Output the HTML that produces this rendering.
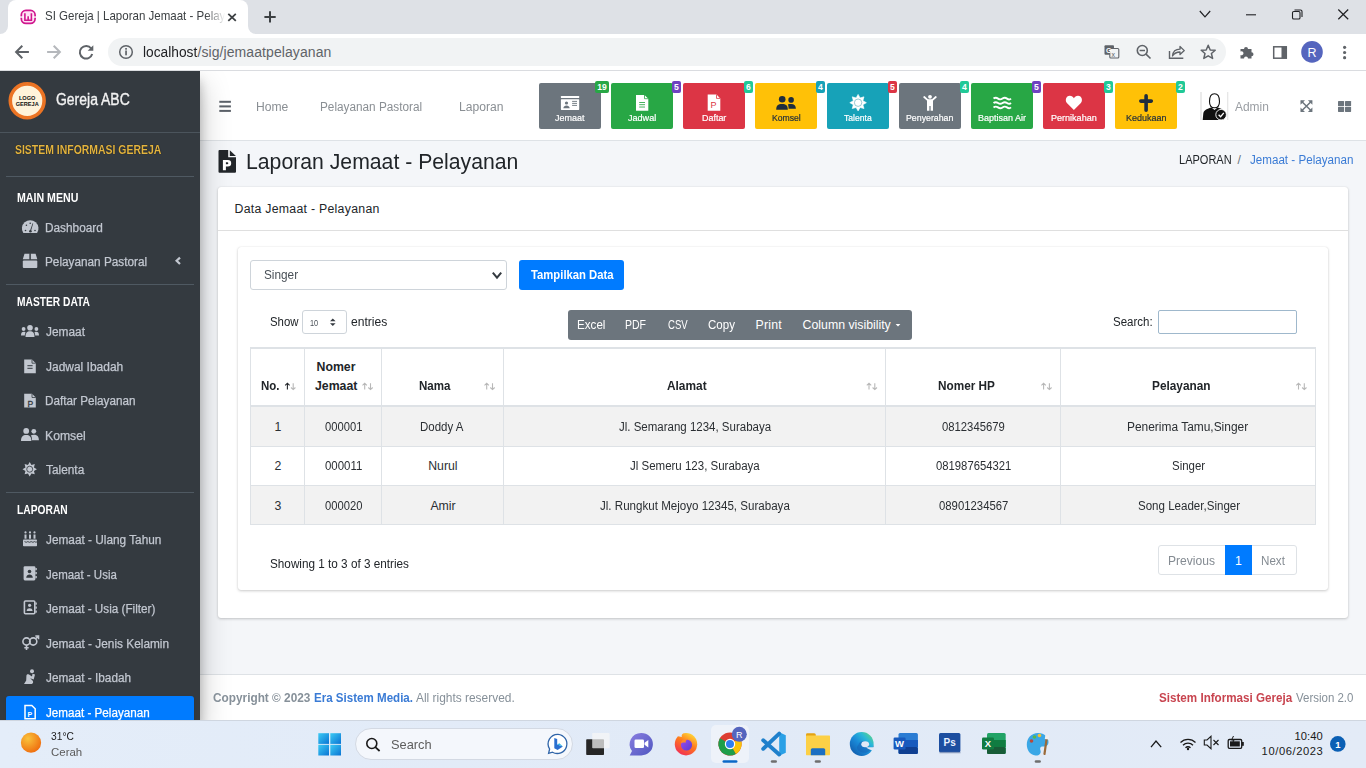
<!DOCTYPE html>
<html><head><meta charset="utf-8"><title>SI Gereja | Laporan Jemaat - Pelayanan</title>
<style>
*{box-sizing:border-box;margin:0;padding:0}
html,body{width:1366px;height:768px;overflow:hidden;background:#f4f6f9;font-family:"Liberation Sans",sans-serif}
.a{position:absolute}
.t{position:absolute;white-space:nowrap;font-family:"Liberation Sans",sans-serif}
svg{position:absolute;overflow:visible}
</style></head><body>
<!-- ===== Chrome window ===== -->
<div class="a" style="left:0;top:0;width:1366px;height:34px;background:#dee1e6"></div>
<div class="a" style="left:8px;top:0;width:240px;height:34px;background:#fff;border-radius:8px 8px 0 0"></div>
<div class="a" style="left:0;top:26px;width:8px;height:8px;background:#fff"></div>
<div class="a" style="left:0;top:26px;width:8px;height:8px;background:#dee1e6;border-bottom-right-radius:8px"></div>
<div class="a" style="left:248px;top:26px;width:8px;height:8px;background:#fff"></div>
<div class="a" style="left:248px;top:26px;width:8px;height:8px;background:#dee1e6;border-bottom-left-radius:8px"></div>
<div class="a" style="left:0;top:34px;width:1366px;height:36px;background:#fff"></div>
<div class="a" style="left:0;top:70px;width:1366px;height:1px;background:#dadce0"></div>
<div class="a" style="left:108px;top:38px;width:1118px;height:28px;background:#f1f3f4;border-radius:14px"></div>

<!-- ===== Page ===== -->
<div class="a" style="left:0;top:71px;width:1366px;height:649px;background:#f4f6f9"></div>
<!-- navbar -->
<div class="a" style="left:200px;top:71px;width:1166px;height:70px;background:#fff;border-bottom:1px solid #dee2e6"></div>
<!-- footer -->
<div class="a" style="left:200px;top:674px;width:1166px;height:46px;background:#fff;border-top:1px solid #dee2e6"></div>
<!-- sidebar -->
<div class="a" style="left:0;top:71px;width:200px;height:649px;background:#343a40;box-shadow:0 14px 28px rgba(0,0,0,.25),0 10px 10px rgba(0,0,0,.22);clip-path:inset(0 -40px 0 0)"></div>
<div class="a" style="left:0;top:132px;width:200px;height:1px;background:#4b545c"></div>
<div class="a" style="left:6px;top:176px;width:188px;height:1px;background:#4f5962"></div>
<div class="a" style="left:6px;top:284px;width:188px;height:1px;background:#4f5962"></div>
<div class="a" style="left:6px;top:492px;width:188px;height:1px;background:#4f5962"></div>
<div class="a" style="left:6px;top:696px;width:188px;height:35px;background:#007bff;border-radius:3px;box-shadow:0 1px 3px rgba(0,0,0,.12)"></div>

<!-- outer card -->
<div class="a" style="left:218px;top:187px;width:1130px;height:431px;background:#fff;border-radius:3px;box-shadow:0 0 1px rgba(0,0,0,.125),0 1px 3px rgba(0,0,0,.2)"></div>
<div class="a" style="left:218px;top:230px;width:1130px;height:1px;background:rgba(0,0,0,.125)"></div>
<!-- inner card -->
<div class="a" style="left:238px;top:247px;width:1090px;height:343px;background:#fff;border-radius:3px;box-shadow:0 0 1px rgba(0,0,0,.125),0 1px 3px rgba(0,0,0,.2)"></div>
<!-- select -->
<div class="a" style="left:250px;top:260px;width:257px;height:30px;background:#fff;border:1px solid #ced4da;border-radius:3px"></div>
<!-- tampilkan -->
<div class="a" style="left:519px;top:260px;width:105px;height:30px;background:#007bff;border-radius:3px"></div>
<!-- length select -->
<div class="a" style="left:302px;top:310px;width:45px;height:24px;background:#fff;border:1px solid #ced4da;border-radius:3px"></div>
<!-- btn group -->
<div class="a" style="left:568px;top:310px;width:344px;height:30px;background:#6c757d;border-radius:3px"></div>
<!-- search input -->
<div class="a" style="left:1158px;top:310px;width:139px;height:24px;background:#fff;border:1px solid #9fb8cc;border-radius:2px"></div>

<!-- table -->
<div class="a" style="left:250px;top:347px;width:1066px;height:178px;background:#fff;border:1px solid #dee2e6"></div>
<div class="a" style="left:251px;top:407px;width:1064px;height:39px;background:#f2f2f2"></div>
<div class="a" style="left:251px;top:485px;width:1064px;height:39px;background:#f2f2f2"></div>
<div class="a" style="left:250px;top:347px;width:1066px;height:2px;background:#dee2e6"></div>
<div class="a" style="left:250px;top:405px;width:1066px;height:2px;background:#dee2e6"></div>
<div class="a" style="left:250px;top:446px;width:1066px;height:1px;background:#dee2e6"></div>
<div class="a" style="left:250px;top:485px;width:1066px;height:1px;background:#dee2e6"></div>
<div class="a" style="left:304px;top:347px;width:1px;height:178px;background:#dee2e6"></div>
<div class="a" style="left:381px;top:347px;width:1px;height:178px;background:#dee2e6"></div>
<div class="a" style="left:503px;top:347px;width:1px;height:178px;background:#dee2e6"></div>
<div class="a" style="left:885px;top:347px;width:1px;height:178px;background:#dee2e6"></div>
<div class="a" style="left:1060px;top:347px;width:1px;height:178px;background:#dee2e6"></div>

<!-- pagination -->
<div class="a" style="left:1158px;top:545px;width:139px;height:30px;background:#fff;border:1px solid #dee2e6;border-radius:3px"></div>
<div class="a" style="left:1225px;top:545px;width:27px;height:30px;background:#007bff"></div>

<!-- navbar buttons -->
<div class="a" style="left:539px;top:83px;width:62px;height:46px;background:#6c757d;border-radius:2px"></div>
<div class="a" style="left:595px;top:81px;width:14px;height:12px;background:#28a745;border-radius:2px;color:#fff;font:700 8.6px/12px 'Liberation Sans';text-align:center">19</div>
<div class="a" style="left:611px;top:83px;width:62px;height:46px;background:#28a745;border-radius:2px"></div>
<div class="a" style="left:672px;top:81px;width:9px;height:12px;background:#6f42c1;border-radius:2px;color:#fff;font:700 8.6px/12px 'Liberation Sans';text-align:center">5</div>
<div class="a" style="left:683px;top:83px;width:62px;height:46px;background:#dc3545;border-radius:2px"></div>
<div class="a" style="left:744px;top:81px;width:9px;height:12px;background:#20c997;border-radius:2px;color:#fff;font:700 8.6px/12px 'Liberation Sans';text-align:center">6</div>
<div class="a" style="left:755px;top:83px;width:62px;height:46px;background:#ffc107;border-radius:2px"></div>
<div class="a" style="left:816px;top:81px;width:9px;height:12px;background:#17a2b8;border-radius:2px;color:#fff;font:700 8.6px/12px 'Liberation Sans';text-align:center">4</div>
<div class="a" style="left:827px;top:83px;width:62px;height:46px;background:#17a2b8;border-radius:2px"></div>
<div class="a" style="left:888px;top:81px;width:9px;height:12px;background:#dc3545;border-radius:2px;color:#fff;font:700 8.6px/12px 'Liberation Sans';text-align:center">5</div>
<div class="a" style="left:899px;top:83px;width:62px;height:46px;background:#6c757d;border-radius:2px"></div>
<div class="a" style="left:960px;top:81px;width:9px;height:12px;background:#20c997;border-radius:2px;color:#fff;font:700 8.6px/12px 'Liberation Sans';text-align:center">4</div>
<div class="a" style="left:971px;top:83px;width:62px;height:46px;background:#28a745;border-radius:2px"></div>
<div class="a" style="left:1032px;top:81px;width:9px;height:12px;background:#6f42c1;border-radius:2px;color:#fff;font:700 8.6px/12px 'Liberation Sans';text-align:center">5</div>
<div class="a" style="left:1043px;top:83px;width:62px;height:46px;background:#dc3545;border-radius:2px"></div>
<div class="a" style="left:1104px;top:81px;width:9px;height:12px;background:#20c997;border-radius:2px;color:#fff;font:700 8.6px/12px 'Liberation Sans';text-align:center">3</div>
<div class="a" style="left:1115px;top:83px;width:62px;height:46px;background:#ffc107;border-radius:2px"></div>
<div class="a" style="left:1176px;top:81px;width:9px;height:12px;background:#20c997;border-radius:2px;color:#fff;font:700 8.6px/12px 'Liberation Sans';text-align:center">2</div>

<!-- ===== Taskbar ===== -->
<div class="a" style="left:0;top:720px;width:1366px;height:48px;background:linear-gradient(90deg,#e4edf9,#e1eaf7 50%,#e3ebf7);border-top:1px solid #cfd6e0"></div>
<div class="a" style="left:355px;top:728px;width:218px;height:32px;background:#f4f7fc;border:1px solid #d3d9e3;border-radius:16px"></div>
<div class="a" style="left:711px;top:725px;width:38px;height:38px;background:#eef2f9;border-radius:5px"></div>

<svg style="left:0;top:0" width="1366" height="768" viewBox="0 0 1366 768">
<!-- ========== CHROME ========== -->
<!-- favicon -->
<rect x="21.3" y="10.4" width="13.8" height="13" rx="4.6" fill="#ffe0f4" stroke="#d0168e" stroke-width="1.7"/>
<rect x="19.5" y="16.4" width="17.5" height="1.3" fill="#fff"/>
<path d="M24.9 13.3 V20.3 H31.4 V13.3 M28.15 16.3 V20.3" fill="none" stroke="#d0168e" stroke-width="1.6"/>
<!-- tab close -->
<path d="M228.3 13.9 L235.8 20.9 M235.8 13.9 L228.3 20.9" stroke="#3c4043" stroke-width="1.8"/>
<!-- new tab + -->
<path d="M270 11.3 V22.5 M264.4 16.9 H275.7" stroke="#3c4043" stroke-width="2"/>
<!-- window controls -->
<path d="M1199.8 11 L1205 16.8 L1210.2 11" fill="none" stroke="#202124" stroke-width="1.2"/>
<path d="M1246 14.8 H1256" stroke="#202124" stroke-width="1.1"/>
<rect x="1292.5" y="11.5" width="7.5" height="7.5" rx="1.3" fill="none" stroke="#202124" stroke-width="1.1"/>
<path d="M1294.5 10 H1300.5 A1.5 1.5 0 0 1 1302 11.5 V17" fill="none" stroke="#202124" stroke-width="1.1"/>
<path d="M1338.3 9.5 L1348.2 19.3 M1348.2 9.5 L1338.3 19.3" stroke="#202124" stroke-width="1.2"/>
<!-- back/fwd/reload -->
<path d="M28.9 52 H16.5 M22.3 45.8 L16.1 52 L22.3 58.2" fill="none" stroke="#5f6368" stroke-width="2"/>
<path d="M47.1 52 H59.5 M53.7 45.8 L59.9 52 L53.7 58.2" fill="none" stroke="#b5b8bc" stroke-width="2"/>
<path d="M91.2 48.5 A6.3 6.3 0 1 0 92.2 54" fill="none" stroke="#5f6368" stroke-width="2"/>
<path d="M93.3 45.2 V50.8 H87.7 Z" fill="#5f6368"/>
<!-- info -->
<circle cx="126" cy="52" r="6.3" fill="none" stroke="#5f6368" stroke-width="1.5"/>
<rect x="125.2" y="50.5" width="1.7" height="4.8" fill="#5f6368"/><rect x="125.2" y="48" width="1.7" height="1.7" fill="#5f6368"/>
<!-- right icons -->
<rect x="1104.5" y="45.2" width="9.5" height="9.5" rx="1" fill="#5f6368"/>
<rect x="1109.8" y="48.5" width="9" height="9.5" rx="1" fill="#f1f3f4" stroke="#5f6368" stroke-width="1.1"/>
<text x="1106" y="53" font-family="Liberation Sans" font-size="7" font-weight="700" fill="#fff">G</text>
<text x="1111.5" y="56.5" font-family="Liberation Sans" font-size="7" fill="#5f6368">x</text>
<circle cx="1142.3" cy="50.5" r="5" fill="none" stroke="#5f6368" stroke-width="1.6"/>
<path d="M1146 54.2 L1150.5 58.5 M1139.6 50.5 H1145" stroke="#5f6368" stroke-width="1.6"/>
<path d="M1169.5 51 V58.2 H1183.3" fill="none" stroke="#5f6368" stroke-width="1.4"/>
<path d="M1172.5 56 C1173 51 1176.5 49.2 1180 49.2 V46.5 L1184.3 50.6 L1180 54.6 V52 C1177 52 1174.5 53 1172.5 56 Z" fill="none" stroke="#5f6368" stroke-width="1.3" stroke-linejoin="round"/>
<path d="M1208.2 45.3 L1210.2 50 L1215.2 50.3 L1211.4 53.5 L1212.6 58.4 L1208.2 55.8 L1203.8 58.4 L1205 53.5 L1201.2 50.3 L1206.2 50 Z" fill="none" stroke="#5f6368" stroke-width="1.5" stroke-linejoin="round"/>
<path d="M1240.5 49 H1244 A2 2 0 1 1 1248 49 H1251.5 V52.3 A2 2 0 1 1 1251.5 56.3 V58.5 H1248 A2 2 0 1 0 1244 58.5 H1240.5 V55 A2 2 0 1 0 1240.5 51.5 Z" fill="#5f6368"/>
<rect x="1273.7" y="46.8" width="12.6" height="11.4" fill="none" stroke="#5f6368" stroke-width="1.5"/>
<rect x="1281.5" y="46.8" width="4.8" height="11.4" fill="#5f6368"/>
<circle cx="1312" cy="51.9" r="10.8" fill="#5565be"/>
<text x="1312" y="56.6" text-anchor="middle" font-family="Liberation Sans" font-size="12.5" fill="#fff">R</text>
<circle cx="1344.6" cy="47.3" r="1.6" fill="#5f6368"/><circle cx="1344.6" cy="52.5" r="1.6" fill="#5f6368"/><circle cx="1344.6" cy="57.7" r="1.6" fill="#5f6368"/>

<!-- ========== SIDEBAR ========== -->
<circle cx="27.2" cy="100.8" r="16.9" fill="#fff3da" stroke="#ec7424" stroke-width="3.6"/>
<text x="27.2" y="100" text-anchor="middle" font-family="Liberation Sans" font-size="5.6" font-weight="700" fill="#111">LOGO</text>
<text x="27.2" y="106" text-anchor="middle" font-family="Liberation Sans" font-size="5.6" font-weight="700" fill="#111">GEREJA</text>
<g fill="#c2c7d0">
<!-- gauge -->
<path d="M23.3 233.1 A8.3 8.3 0 1 1 37.1 233.1 Z"/>
<!-- box -->
<path d="M24.5 253.7 H29.6 V259.3 H22.8 Z M30.6 253.7 H35.6 L37.3 259.3 H30.6 Z"/>
<rect x="22.8" y="260.4" width="14.5" height="7.7" rx="1"/>
<!-- users (Jemaat) -->
<circle cx="30" cy="327.8" r="2.8"/><circle cx="23.6" cy="329" r="1.9"/><circle cx="36.4" cy="329" r="1.9"/>
<path d="M25.5 337 C25.5 333 27 331.3 30 331.3 C33 331.3 34.5 333 34.5 337 Z"/>
<path d="M21 335.6 C21 332.8 22 331.8 23.8 331.8 C24.8 331.8 25.3 332.1 25.6 332.4 C25 333.5 24.8 334.5 24.8 335.6 Z"/>
<path d="M39 335.6 C39 332.8 38 331.8 36.2 331.8 C35.2 331.8 34.7 332.1 34.4 332.4 C35 333.5 35.2 334.5 35.2 335.6 Z"/>
<!-- file-alt (Jadwal) -->
<path d="M24.2 359.5 H32 L35.8 363.2 V373.2 H24.2 Z"/>
<!-- file-powerpoint (Daftar) -->
<path d="M24.2 393.8 H32 L35.8 397.5 V407.5 H24.2 Z"/>
<!-- user-friends (Komsel) -->
<circle cx="26.2" cy="430.9" r="2.9"/><circle cx="33.8" cy="431.3" r="2.4"/>
<path d="M21 441 C21 436.8 22.8 435 26.2 435 C29.6 435 31.4 436.8 31.4 441 Z"/>
<path d="M32 440.2 C32 437.7 31.6 436.4 30.8 435.6 C31.5 435.1 32.5 434.8 33.9 434.8 C37 434.8 38.9 436.5 38.9 440.2 Z"/>
<!-- cog (Talenta) -->
<path d="M29.70 462.00 L31.46 464.95 L34.79 464.11 L33.95 467.44 L36.90 469.20 L33.95 470.96 L34.79 474.29 L31.46 473.45 L29.70 476.40 L27.94 473.45 L24.61 474.29 L25.45 470.96 L22.50 469.20 L25.45 467.44 L24.61 464.11 L27.94 464.95 Z"/>
<!-- birthday cake -->
<rect x="23" y="539.5" width="14" height="6.7" rx="0.8"/>
<rect x="24.5" y="534.5" width="2" height="4.2"/><rect x="29" y="534.5" width="2" height="4.2"/><rect x="33.5" y="534.5" width="2" height="4.2"/>
<circle cx="25.5" cy="532.4" r="1.1"/><circle cx="30" cy="532.4" r="1.1"/><circle cx="34.5" cy="532.4" r="1.1"/>
<!-- address-book -->
<rect x="23.6" y="566.2" width="11.8" height="14.2" rx="1.3"/>
<rect x="35.4" y="568" width="1.4" height="2.2"/><rect x="35.4" y="572" width="1.4" height="2.2"/><rect x="35.4" y="576" width="1.4" height="2.2"/>
<!-- address-book outline -->
<rect x="24.4" y="601" width="10.4" height="12.8" rx="1" fill="none" stroke="#c2c7d0" stroke-width="1.6"/>
<rect x="35.4" y="602.5" width="1.4" height="2.2"/><rect x="35.4" y="606.5" width="1.4" height="2.2"/><rect x="35.4" y="610.5" width="1.4" height="2.2"/>
<circle cx="29.6" cy="605.3" r="1.6"/><path d="M26.6 611 C26.8 608.8 28 608.2 29.6 608.2 C31.2 608.2 32.4 608.8 32.6 611 Z"/>
<!-- praying -->
<circle cx="32" cy="671.2" r="2"/>
<path d="M24 684 L31 684 C33.5 684 33.5 681.5 32.5 680.5 L30.2 678.3 L33.7 679.6 L35 674.5 L32.5 673.8 L32 676.5 L29 674.6 C27.6 673.8 26.4 674.5 26.4 676 L26.2 680.4 Z"/>
</g>
<g fill="none" stroke="#c2c7d0" stroke-width="1.6">
<!-- venus mars -->
<circle cx="26.5" cy="641.5" r="3.6"/><circle cx="33.2" cy="641.5" r="3.6"/>
<path d="M26.5 645.1 V650 M24.3 647.8 H28.7 M35.6 638.8 L38.2 636.2 M35.3 636 H38.5 V639.2"/>
<!-- chevron -->
<path d="M180 257.6 L176.6 260.8 L180 264" stroke-width="2.2"/>
</g>
<!-- gauge details (dark) -->
<g fill="#343a40">
<path d="M29.9 231 L32.6 223.3 L33.2 223.5 L30.9 231.3 Z"/><circle cx="30.4" cy="231.2" r="1.3"/>
<circle cx="25.5" cy="230.5" r="0.8"/><circle cx="35" cy="230.5" r="0.8"/><circle cx="26.4" cy="225.2" r="0.8"/><circle cx="30.2" cy="223.2" r="0.8"/>
<rect x="29.6" y="253.7" width="1" height="5.6"/>
<rect x="27.4" y="365.2" width="5.2" height="1"/><rect x="27.4" y="367.8" width="5.2" height="1"/>
<path d="M32 393.8 V397.5 H35.8" fill="none" stroke="#343a40" stroke-width="0.8"/>
<path d="M32 359.5 V363.2 H35.8" fill="none" stroke="#343a40" stroke-width="0.8"/>
<circle cx="29.7" cy="469.2" r="3" fill="#c2c7d0" stroke="#343a40" stroke-width="0.8"/>
<path d="M24.5 541.6 Q26.2 543 27.8 541.6 Q29.5 543 31.2 541.6 Q32.9 543 34.6 541.6 Q36 542.8 37 541.8" fill="none" stroke="#343a40" stroke-width="0.9"/>
<circle cx="29.5" cy="571.5" r="1.8"/><path d="M26.2 577.8 C26.4 575.3 27.8 574.6 29.5 574.6 C31.2 574.6 32.6 575.3 32.8 577.8 Z"/>
</g>
<text x="27.6" y="406.6" font-family="Liberation Sans" font-size="8.6" font-weight="400" fill="#343a40" stroke="#343a40" stroke-width="0.3">P</text>
<!-- active item icon -->
<path d="M25 705.5 H31.8 L35.2 708.8 V718.8 H25 Z" fill="none" stroke="#fff" stroke-width="1.5"/>
<text x="27.5" y="716.6" font-family="Liberation Sans" font-size="7" font-weight="700" fill="#fff">P</text>

<!-- ========== NAVBAR ========== -->
<g fill="#5a6068"><rect x="219.3" y="100.8" width="11.6" height="2"/><rect x="219.3" y="105.4" width="11.6" height="2"/><rect x="219.3" y="109.9" width="11.6" height="2"/></g>
<!-- id card -->
<g fill="#fff"><rect x="560.9" y="96" width="18.3" height="2" rx="0.5"/><rect x="560.9" y="99.2" width="18.3" height="10.7" rx="0.6"/></g>
<g fill="#6c757d"><circle cx="566.5" cy="103" r="1.6"/><path d="M563.3 108.3 C563.6 106.4 564.8 105.6 566.5 105.6 C568.2 105.6 569.4 106.4 569.7 108.3 Z"/>
<rect x="572.1" y="100.9" width="4.9" height="0.9"/><rect x="572.1" y="102.9" width="4.9" height="0.9"/><rect x="572.1" y="104.9" width="4.9" height="0.9"/></g>
<!-- file-alt jadwal -->
<path d="M636 94.9 H644.5 L648.3 98.7 V110.7 H636 Z" fill="#fff"/>
<path d="M644.5 94.9 V98.7 H648.3" fill="none" stroke="#28a745" stroke-width="0.8"/>
<g fill="#28a745"><rect x="639.2" y="102" width="5.8" height="0.85"/><rect x="639.2" y="104.3" width="5.8" height="0.85"/><rect x="639.2" y="106.6" width="5.8" height="0.85"/></g>
<!-- file-ppt daftar -->
<path d="M707.7 94.6 H716.5 L720.3 98.4 V110.7 H707.7 Z" fill="#fff"/>
<path d="M716.5 94.6 V98.4 H720.3" fill="none" stroke="#dc3545" stroke-width="0.8"/>
<text x="710.4" y="108.4" font-family="Liberation Sans" font-size="9" font-weight="400" fill="#dc3545">P</text>
<!-- user friends komsel -->
<g fill="#1f2d3d"><circle cx="782.2" cy="99.3" r="3.3"/><circle cx="791.1" cy="99.9" r="2.8"/>
<path d="M776.2 109.8 C776.2 105.6 778 104 782 104 C786 104 787.8 105.6 787.8 109.8 Z"/>
<path d="M788.6 108.8 C788.6 106.5 788.2 105.2 787.8 104.6 C788.6 104.1 789.8 104 791.2 104 C794.3 104 795.9 105.5 795.9 108.8 Z"/></g>
<!-- sun talenta -->
<path d="M858.10 94.40 L860.09 97.90 L863.97 96.83 L862.90 100.71 L866.40 102.70 L862.90 104.69 L863.97 108.57 L860.09 107.50 L858.10 111.00 L856.11 107.50 L852.23 108.57 L853.30 104.69 L849.80 102.70 L853.30 100.71 L852.23 96.83 L856.11 97.90 Z" fill="#fff" stroke="#fff" stroke-width="0.6" stroke-linejoin="round"/>
<circle cx="858.1" cy="102.7" r="3.7" fill="#fff" stroke="#6fb3bf" stroke-width="0.7"/>
<!-- child -->
<g fill="#fff"><circle cx="930" cy="96.8" r="1.9"/><path d="M927 99.3 H933 V110.7 H930.6 V106 H929.4 V110.7 H927 Z"/></g>
<path d="M924.2 97 L928 100.4 M935.8 97 L932 100.4" stroke="#fff" stroke-width="1.8" stroke-linecap="round"/>
<!-- water -->
<path d="M993.5 98.6 q2.2 -1.6 4.5 0 t4.5 0 t4.5 0 t4 0 M993.5 103 q2.2 -1.6 4.5 0 t4.5 0 t4.5 0 t4 0 M993.5 107.4 q2.2 -1.6 4.5 0 t4.5 0 t4.5 0 t4 0" fill="none" stroke="#fff" stroke-width="1.9"/>
<!-- heart -->
<path d="M1073.9 109.9 L1066.9 103 C1064.8 100.8 1065.8 95.8 1069.8 95.8 C1071.8 95.8 1073 97 1073.9 98.2 C1074.8 97 1076 95.8 1078 95.8 C1082 95.8 1083 100.8 1080.9 103 Z" fill="#fff"/>
<!-- cross -->
<path d="M1146.1 95.8 V110.2 M1140.8 101.1 H1151.3" stroke="#1f2d3d" stroke-width="3.6" stroke-linecap="round"/>
<!-- user avatar -->
<rect x="1200.4" y="92" width="27.9" height="28" fill="#fff"/>
<rect x="1200.4" y="92" width="1.2" height="28" fill="#ddd"/><rect x="1227.1" y="92" width="1.2" height="28" fill="#e5e5e5"/>
<path d="M1209.5 101.5 C1209.5 96.4 1211.7 93.7 1214.5 93.7 C1217.3 93.7 1219.5 96.4 1219.5 101.5 C1219.5 105.5 1217.5 107.8 1214.5 107.8 C1211.5 107.8 1209.5 105.5 1209.5 101.5 Z" fill="none" stroke="#111" stroke-width="1.1"/>
<path d="M1202.7 120 L1203.3 113.5 C1203.8 110.5 1206 109 1211.5 107.5 L1214.5 110 L1217.5 107.5 C1221 108.4 1223 109.5 1224 111 L1224 120 Z" fill="#111"/>
<circle cx="1221.1" cy="114.7" r="5.3" fill="#111" stroke="#fff" stroke-width="0.9"/>
<path d="M1218.6 114.7 L1220.6 116.7 L1223.8 112.9" fill="none" stroke="#fff" stroke-width="1.3"/>
<!-- expand -->
<g fill="none" stroke="#6c757d" stroke-width="1.5"><path d="M1301.2 101 L1311.7 111.2 M1311.7 101 L1301.2 111.2"/></g>
<g fill="#6c757d"><path d="M1300.5 100.2 H1305 L1300.5 104.7 Z M1312.4 100.2 H1307.9 L1312.4 104.7 Z M1300.5 111.9 H1305 L1300.5 107.4 Z M1312.4 111.9 H1307.9 L1312.4 107.4 Z"/></g>
<!-- th-large -->
<g fill="#6c757d"><rect x="1338" y="100.9" width="6.1" height="5.1" rx="0.6"/><rect x="1345" y="100.9" width="6.1" height="5.1" rx="0.6"/><rect x="1338" y="106.8" width="6.1" height="5.1" rx="0.6"/><rect x="1345" y="106.8" width="6.1" height="5.1" rx="0.6"/></g>

<!-- ========== CONTENT ========== -->
<path d="M219.5 150 H228.2 V157.3 H236 V171.7 A1 1 0 0 1 235 172.7 H219.5 A1 1 0 0 1 218.5 171.7 V151 A1 1 0 0 1 219.5 150 Z" fill="#212529"/>
<path d="M229.8 150.2 L235.9 156 H229.8 Z" fill="#212529"/>
<path d="M222.9 160 H227.9 A3.3 3.3 0 0 1 227.9 166.6 H225.9 V170.2 H222.9 Z M225.9 162.3 V164.3 H227.3 A1 1 0 0 0 227.3 162.3 Z" fill="#fff" fill-rule="evenodd"/>
<!-- select chevron -->
<path d="M492.8 272.6 L497 277.6 L501.2 272.6" fill="none" stroke="#343a40" stroke-width="2"/>
<!-- length spinner -->
<path d="M330 321.3 L332.8 318.5 L335.6 321.3 Z M330 323.2 L332.8 326 L335.6 323.2 Z" fill="#343a40"/>
<!-- caret -->
<path d="M895.6 323.9 L898 326.4 L900.4 323.9 Z" fill="#fff"/>
<!-- sort arrows -->
<g stroke-width="1.1" fill="none">
<path d="M287.4 389.6 V383.2 M285.2 385.3 L287.4 383.2 L289.6 385.3" stroke="#212529"/>
<path d="M293.2 383.2 V389.6 M291 387.5 L293.2 389.6 L295.4 387.5" stroke="#b8b8b8"/>
</g>
<g stroke="#b8b8b8" stroke-width="1.1" fill="none">
<path d="M364.7 389.6 V383.2 M362.5 385.3 L364.7 383.2 L366.9 385.3 M370.5 383.2 V389.6 M368.3 387.5 L370.5 389.6 L372.7 387.5"/>
<path d="M486.7 389.6 V383.2 M484.5 385.3 L486.7 383.2 L488.9 385.3 M492.5 383.2 V389.6 M490.3 387.5 L492.5 389.6 L494.7 387.5"/>
<path d="M869 389.6 V383.2 M866.8 385.3 L869 383.2 L871.2 385.3 M874.8 383.2 V389.6 M872.6 387.5 L874.8 389.6 L877 387.5"/>
<path d="M1043.6 389.6 V383.2 M1041.4 385.3 L1043.6 383.2 L1045.8 385.3 M1049.4 383.2 V389.6 M1047.2 387.5 L1049.4 389.6 L1051.6 387.5"/>
<path d="M1298.5 389.6 V383.2 M1296.3 385.3 L1298.5 383.2 L1300.7 385.3 M1304.3 383.2 V389.6 M1302.1 387.5 L1304.3 389.6 L1306.5 387.5"/>
</g>

<!-- ========== TASKBAR ========== -->
<defs>
<radialGradient id="sun" cx="35%" cy="30%" r="75%"><stop offset="0" stop-color="#f9c23c"/><stop offset="1" stop-color="#ef6c0e"/></radialGradient>
<linearGradient id="win" x1="0" y1="0" x2="1" y2="1"><stop offset="0" stop-color="#3ccbf4"/><stop offset="1" stop-color="#0a74d4"/></linearGradient>
<linearGradient id="edge" x1="0" y1="0" x2="1" y2="1"><stop offset="0" stop-color="#38d17d"/><stop offset=".5" stop-color="#1aa4d8"/><stop offset="1" stop-color="#0c59a4"/></linearGradient>
<linearGradient id="ff" x1="0" y1="0" x2="1" y2="1"><stop offset="0" stop-color="#ffcc33"/><stop offset=".5" stop-color="#ff5a36"/><stop offset="1" stop-color="#e31587"/></linearGradient>
<linearGradient id="meet" x1="0" y1="0" x2="1" y2="1"><stop offset="0" stop-color="#8a7ee0"/><stop offset="1" stop-color="#4e56c0"/></linearGradient>
</defs>
<circle cx="31" cy="742.7" r="10.1" fill="url(#sun)"/>
<g fill="url(#win)"><rect x="318.3" y="733.2" width="10.7" height="10.7"/><rect x="330.3" y="733.2" width="10.7" height="10.7"/><rect x="318.3" y="744.8" width="10.7" height="10.7"/><rect x="330.3" y="744.8" width="10.7" height="10.7"/></g>
<circle cx="371.8" cy="743.5" r="5" fill="none" stroke="#1a1a1a" stroke-width="1.6"/>
<path d="M375.3 747.2 L379.6 751" stroke="#1a1a1a" stroke-width="1.8"/>
<!-- bing -->
<path d="M558 734.3 A9.6 9.6 0 1 1 552.5 752.2 L548.6 753.4 L549.6 749 A9.6 9.6 0 0 1 558 734.3 Z" fill="#fff" stroke="#2f64a8" stroke-width="1.3"/>
<path d="M554.3 738 L557.2 739 V744.6 L562.9 746.4 L557.6 749.9 L554.3 748.3 Z" fill="#2a6fd0"/>
<path d="M557.2 744.6 L559.3 743.2 L562.9 746.4 Z" fill="#35b8e6"/>
<!-- task view -->
<rect x="586.2" y="739.3" width="17.8" height="15.8" rx="0.8" fill="#262626"/>
<rect x="592.2" y="733" width="17.4" height="15.2" rx="0.8" fill="#f6f6f6" opacity="0.72"/>
<!-- meet -->
<path d="M641.3 733 A11.6 11.2 0 1 1 641.3 755.4 H629.7 L632 751 A11.6 11.2 0 0 1 641.3 733 Z" fill="url(#meet)"/>
<rect x="634.5" y="739.5" width="9.5" height="8.5" rx="1.3" fill="#fff"/><path d="M644.5 742.8 L648.3 740 V747.5 L644.5 744.7 Z" fill="#fff"/>
<!-- firefox -->
<defs><linearGradient id="ff2" x1="0.8" y1="0" x2="0.2" y2="1"><stop offset="0" stop-color="#ffe03a"/><stop offset=".45" stop-color="#ff7a1c"/><stop offset="1" stop-color="#f0285a"/></linearGradient>
<linearGradient id="ffp" x1="0" y1="0" x2="1" y2="1"><stop offset="0" stop-color="#9a4cf0"/><stop offset="1" stop-color="#5b3ad0"/></linearGradient></defs>
<circle cx="686" cy="744.2" r="11.2" fill="url(#ff2)"/>
<path d="M677 736 C679 733.5 681.5 732.5 684 732.6 C682 734 681.3 735.5 681.8 737 Z" fill="#e1e9f6"/>
<circle cx="686.5" cy="745" r="5.6" fill="url(#ffp)"/>
<path d="M680.7 743.5 C681.5 739.8 684.5 738.6 687.5 739.2 C686 740.2 685.2 741.5 685.8 742.8 C683.5 742 682 742.5 680.7 743.5 Z" fill="#ff8a2a"/>
<!-- chrome -->
<circle cx="730" cy="744" r="11.6" fill="#dd3d31"/>
<path d="M730 744 L740.1 738.2 A11.6 11.6 0 0 1 735.8 754 Z" fill="#f9c20a"/>
<path d="M730 744 L735.8 754 A11.6 11.6 0 0 1 719.9 738.2 Z" fill="#1e9e4a"/>
<circle cx="730" cy="744" r="5.2" fill="#fff"/><circle cx="730" cy="744" r="4" fill="#2e7ef0"/>
<circle cx="739.3" cy="734.3" r="7.5" fill="#5565be"/>
<text x="739.3" y="737.8" text-anchor="middle" font-family="Liberation Sans" font-size="9" fill="#fff">R</text>
<rect x="722.5" y="760.2" width="15" height="2.6" rx="1.3" fill="#0a68c8"/>
<!-- vscode -->
<path d="M779.2 732.3 L785.8 735.3 V752.7 L779.2 755.8 Z" fill="#2aa0e6"/>
<path d="M779.2 733.6 L763.2 748.8 M779.2 754.5 L763.2 740.2" stroke="#1f80cc" stroke-width="3.9" stroke-linecap="round"/>
<rect x="770.8" y="760.2" width="6.2" height="2.6" rx="1.3" fill="#6e6e6e"/>
<!-- folder -->
<path d="M806 734.6 A1.4 1.4 0 0 1 807.4 733.2 H814.2 A1.6 1.6 0 0 1 815.8 734.8 V737.5 H806 Z" fill="#e4a313"/>
<rect x="806" y="735.6" width="24" height="19.6" rx="0.6" fill="#fcd046"/>
<path d="M810.8 755.2 V749.8 A1.6 1.6 0 0 1 812.4 748.2 H823.6 A1.6 1.6 0 0 1 825.2 749.8 V755.2 Z" fill="#1b6fc2"/>
<rect x="814.7" y="760.2" width="6.2" height="2.6" rx="1.3" fill="#6e6e6e"/>
<!-- edge -->
<defs><linearGradient id="edge2" x1="0" y1="1" x2="1" y2="0"><stop offset="0" stop-color="#0f4fa0"/><stop offset=".45" stop-color="#1a8ad8"/><stop offset=".7" stop-color="#2ab8d8"/><stop offset="1" stop-color="#6fe06a"/></linearGradient></defs>
<circle cx="861.7" cy="744" r="11.9" fill="url(#edge2)"/>
<path d="M858.6 744.6 C858.6 740.3 866.6 739.8 868.8 744.2 C869.6 746 868.5 747.3 866.5 747.4 L874 747.4 L874 744 C873 751 866 754.5 860.5 752 C856.5 750 856 747 858.6 744.6 Z" fill="#1562b4" opacity="0.55"/>
<ellipse cx="865.2" cy="744.3" rx="3.9" ry="3" fill="#e1e9f6"/>
<path d="M866 747.2 H874.5 V751 C872 750.5 868.5 749.5 866 747.2 Z" fill="#e1e9f6"/>
<!-- word -->
<rect x="898.5" y="733" width="19.4" height="21" rx="1.5" fill="#2b7cd3"/>
<rect x="898.5" y="740" width="19.4" height="7" fill="#185abd"/><rect x="898.5" y="747" width="19.4" height="7" rx="1.5" fill="#103f91"/>
<rect x="893.6" y="737.5" width="12" height="12" rx="1.2" fill="#185abd"/>
<text x="899.6" y="747.2" text-anchor="middle" font-family="Liberation Sans" font-size="9.5" font-weight="700" fill="#fff">W</text>
<!-- ps -->
<rect x="939" y="733" width="21.4" height="19.3" rx="1.5" fill="#1c4ea0"/>
<rect x="939.5" y="751.8" width="21" height="1.5" fill="#6b7fa8" opacity="0.6"/>
<text x="949.7" y="745.5" text-anchor="middle" font-family="Liberation Sans" font-size="10" font-weight="700" fill="#e8f0ff">Ps</text>
<!-- excel -->
<rect x="987" y="733" width="18.7" height="21" rx="1.5" fill="#21a366"/>
<rect x="987" y="740" width="18.7" height="7" fill="#107c41"/><rect x="987" y="747" width="18.7" height="7" rx="1.5" fill="#185c37"/>
<rect x="982" y="737.5" width="12" height="12" rx="1.2" fill="#107c41"/>
<text x="988" y="747.2" text-anchor="middle" font-family="Liberation Sans" font-size="9.5" font-weight="700" fill="#fff">X</text>
<!-- paint -->
<path d="M1038 733 C1045 733 1048.5 737.5 1048.5 742 C1048.5 746 1045 747 1043 746.5 C1040.5 746 1039.5 748 1040.5 750.5 C1041.5 753.5 1039 755.8 1035.5 755.5 C1030 755 1026.8 750 1026.8 744.5 C1026.8 738 1031.5 733 1038 733 Z" fill="#3aa7e6"/>
<circle cx="1031.5" cy="741" r="1.8" fill="#b94a3a"/><circle cx="1034.5" cy="737" r="1.8" fill="#5bb84a"/><circle cx="1039.5" cy="735.5" r="1.8" fill="#f2c233"/>
<rect x="1044.5" y="738" width="2.2" height="17" rx="1" fill="#9a6a3a" transform="rotate(8 1045 746)"/>
<rect x="1043.8" y="735" width="4" height="4" fill="#eee" transform="rotate(8 1045 746)"/>
<rect x="1034.7" y="760.2" width="6.2" height="2.6" rx="1.3" fill="#6e6e6e"/>
<!-- tray -->
<path d="M1151 747.2 L1156 741 L1161.2 747.2" fill="none" stroke="#1a1a1a" stroke-width="1.3"/>
<g fill="none" stroke="#1a1a1a" stroke-width="1.3">
<path d="M1180.5 742.5 A10.5 10.5 0 0 1 1195.5 742.5"/><path d="M1183 745.2 A7 7 0 0 1 1193 745.2"/><path d="M1185.5 747.8 A3.5 3.5 0 0 1 1190.5 747.8"/>
</g>
<circle cx="1188" cy="749" r="1.2" fill="#1a1a1a"/>
<path d="M1204.3 740 H1207 L1211 736.3 V748.7 L1207 745 H1204.3 Z" fill="none" stroke="#1a1a1a" stroke-width="1.1"/>
<path d="M1213.5 740 L1218.5 745 M1218.5 740 L1213.5 745" stroke="#1a1a1a" stroke-width="1.1"/>
<rect x="1228.2" y="739.5" width="13.5" height="8.8" rx="1.2" fill="none" stroke="#1a1a1a" stroke-width="1.3"/>
<rect x="1230" y="741.3" width="9.8" height="5.2" fill="#1a1a1a"/><rect x="1242" y="742" width="1.8" height="3.8" fill="#1a1a1a"/>
<path d="M1233.5 736 L1231.5 740 H1234 L1232.5 743" fill="none" stroke="#1a1a1a" stroke-width="1"/>
<circle cx="1337.8" cy="743.9" r="7.8" fill="#0a5fb4"/>
<text x="1337.8" y="747.6" text-anchor="middle" font-family="Liberation Sans" font-size="9.5" font-weight="700" fill="#fff">1</text>
</svg>

<div class="t" style="left:44.60px;top:10.29px;font-size:12.6px;line-height:12.6px;font-weight:400;color:#3c4043;letter-spacing:-0.000px;transform:scaleX(0.9147);transform-origin:0 0;width:197px;overflow:hidden;-webkit-mask-image:linear-gradient(90deg,#000 89%,transparent);">SI Gereja | Laporan Jemaat - Pelay</div>
<div class="t" style="left:142.80px;top:44.90px;font-size:14px;line-height:14px;font-weight:400;color:#202124;letter-spacing:-0.000px;transform:scaleX(0.9808);transform-origin:0 0;">localhost</div>
<div class="t" style="left:197.50px;top:44.90px;font-size:14px;line-height:14px;font-weight:400;color:#5f6368;letter-spacing:0.078px;">/sig/jemaatpelayanan</div>
<div class="t" style="left:56.00px;top:91.60px;font-size:16px;line-height:16px;font-weight:400;color:#f2f2f2;letter-spacing:-0.000px;transform:scaleX(0.8725);transform-origin:0 0;-webkit-text-stroke:0.35px currentColor;">Gereja ABC</div>
<div class="t" style="left:14.60px;top:143.74px;font-size:12.3px;line-height:12.3px;font-weight:700;color:#e3b440;letter-spacing:-0.000px;transform:scaleX(0.8497);transform-origin:0 0;text-shadow:0 0 1px #000;">SISTEM INFORMASI GEREJA</div>
<div class="t" style="left:16.60px;top:191.74px;font-size:12.3px;line-height:12.3px;font-weight:700;color:#ffffff;letter-spacing:-0.000px;transform:scaleX(0.8628);transform-origin:0 0;">MAIN MENU</div>
<div class="t" style="left:45.04px;top:221.54px;font-size:12.3px;line-height:12.3px;font-weight:400;color:#c2c7d0;letter-spacing:-0.000px;transform:scaleX(0.9609);transform-origin:0 0;-webkit-text-stroke:0.25px currentColor;">Dashboard</div>
<div class="t" style="left:45.04px;top:255.74px;font-size:12.3px;line-height:12.3px;font-weight:400;color:#c2c7d0;letter-spacing:-0.000px;transform:scaleX(0.9580);transform-origin:0 0;-webkit-text-stroke:0.25px currentColor;">Pelayanan Pastoral</div>
<div class="t" style="left:16.60px;top:295.55px;font-size:12.3px;line-height:12.3px;font-weight:700;color:#ffffff;letter-spacing:-0.000px;transform:scaleX(0.8316);transform-origin:0 0;">MASTER DATA</div>
<div class="t" style="left:46.00px;top:325.94px;font-size:12.3px;line-height:12.3px;font-weight:400;color:#c2c7d0;letter-spacing:-0.000px;transform:scaleX(0.9656);transform-origin:0 0;-webkit-text-stroke:0.25px currentColor;">Jemaat</div>
<div class="t" style="left:46.00px;top:360.75px;font-size:12.3px;line-height:12.3px;font-weight:400;color:#c2c7d0;letter-spacing:-0.000px;transform:scaleX(0.9740);transform-origin:0 0;-webkit-text-stroke:0.25px currentColor;">Jadwal Ibadah</div>
<div class="t" style="left:45.05px;top:394.85px;font-size:12.3px;line-height:12.3px;font-weight:400;color:#c2c7d0;letter-spacing:-0.000px;transform:scaleX(0.9524);transform-origin:0 0;-webkit-text-stroke:0.25px currentColor;">Daftar Pelayanan</div>
<div class="t" style="left:45.01px;top:429.55px;font-size:12.3px;line-height:12.3px;font-weight:400;color:#c2c7d0;letter-spacing:-0.000px;transform:scaleX(0.9931);transform-origin:0 0;-webkit-text-stroke:0.25px currentColor;">Komsel</div>
<div class="t" style="left:46.00px;top:464.05px;font-size:12.3px;line-height:12.3px;font-weight:400;color:#c2c7d0;letter-spacing:-0.000px;transform:scaleX(0.9645);transform-origin:0 0;-webkit-text-stroke:0.25px currentColor;">Talenta</div>
<div class="t" style="left:16.60px;top:503.55px;font-size:12.3px;line-height:12.3px;font-weight:700;color:#ffffff;letter-spacing:-0.000px;transform:scaleX(0.8339);transform-origin:0 0;">LAPORAN</div>
<div class="t" style="left:46.00px;top:534.04px;font-size:12.3px;line-height:12.3px;font-weight:400;color:#c2c7d0;letter-spacing:-0.000px;transform:scaleX(0.9605);transform-origin:0 0;-webkit-text-stroke:0.25px currentColor;">Jemaat - Ulang Tahun</div>
<div class="t" style="left:46.00px;top:568.54px;font-size:12.3px;line-height:12.3px;font-weight:400;color:#c2c7d0;letter-spacing:-0.000px;transform:scaleX(0.9340);transform-origin:0 0;-webkit-text-stroke:0.25px currentColor;">Jemaat - Usia</div>
<div class="t" style="left:46.00px;top:602.84px;font-size:12.3px;line-height:12.3px;font-weight:400;color:#c2c7d0;letter-spacing:-0.000px;transform:scaleX(0.9530);transform-origin:0 0;-webkit-text-stroke:0.25px currentColor;">Jemaat - Usia (Filter)</div>
<div class="t" style="left:46.00px;top:637.84px;font-size:12.3px;line-height:12.3px;font-weight:400;color:#c2c7d0;letter-spacing:-0.000px;transform:scaleX(0.9628);transform-origin:0 0;-webkit-text-stroke:0.25px currentColor;">Jemaat - Jenis Kelamin</div>
<div class="t" style="left:46.00px;top:671.54px;font-size:12.3px;line-height:12.3px;font-weight:400;color:#c2c7d0;letter-spacing:-0.000px;transform:scaleX(0.9570);transform-origin:0 0;-webkit-text-stroke:0.25px currentColor;">Jemaat - Ibadah</div>
<div class="t" style="left:46.00px;top:706.54px;font-size:12.3px;line-height:12.3px;font-weight:400;color:#ffffff;letter-spacing:-0.000px;transform:scaleX(0.9477);transform-origin:0 0;-webkit-text-stroke:0.25px currentColor;">Jemaat - Pelayanan</div>
<div class="t" style="left:255.51px;top:100.75px;font-size:12.3px;line-height:12.3px;font-weight:400;color:#8a8f94;letter-spacing:-0.000px;transform:scaleX(0.9855);transform-origin:0 0;">Home</div>
<div class="t" style="left:320.04px;top:100.55px;font-size:12.3px;line-height:12.3px;font-weight:400;color:#8a8f94;letter-spacing:-0.000px;transform:scaleX(0.9580);transform-origin:0 0;">Pelayanan Pastoral</div>
<div class="t" style="left:459.42px;top:100.55px;font-size:12.3px;line-height:12.3px;font-weight:400;color:#8a8f94;letter-spacing:-0.000px;transform:scaleX(0.9844);transform-origin:0 0;">Laporan</div>
<div class="t" style="left:1234.50px;top:100.55px;font-size:12.3px;line-height:12.3px;font-weight:400;color:#9a9ea3;letter-spacing:-0.000px;transform:scaleX(0.9710);transform-origin:0 0;">Admin</div>
<div class="t" style="left:555.10px;top:113.01px;font-size:9.4px;line-height:9.4px;font-weight:400;color:#fff;letter-spacing:-0.000px;transform:scaleX(0.9570);transform-origin:0 0;-webkit-text-stroke:0.2px currentColor;">Jemaat</div>
<div class="t" style="left:627.95px;top:113.01px;font-size:9.4px;line-height:9.4px;font-weight:400;color:#fff;letter-spacing:-0.000px;transform:scaleX(0.9656);transform-origin:0 0;-webkit-text-stroke:0.2px currentColor;">Jadwal</div>
<div class="t" style="left:701.90px;top:113.01px;font-size:9.4px;line-height:9.4px;font-weight:400;color:#fff;letter-spacing:-0.000px;transform:scaleX(0.9525);transform-origin:0 0;-webkit-text-stroke:0.2px currentColor;">Daftar</div>
<div class="t" style="left:771.65px;top:113.01px;font-size:9.4px;line-height:9.4px;font-weight:400;color:#1f2d3d;letter-spacing:-0.000px;transform:scaleX(0.9205);transform-origin:0 0;-webkit-text-stroke:0.2px currentColor;">Komsel</div>
<div class="t" style="left:843.75px;top:113.01px;font-size:9.4px;line-height:9.4px;font-weight:400;color:#fff;letter-spacing:-0.000px;transform:scaleX(0.9189);transform-origin:0 0;-webkit-text-stroke:0.2px currentColor;">Talenta</div>
<div class="t" style="left:906.40px;top:113.01px;font-size:9.4px;line-height:9.4px;font-weight:400;color:#fff;letter-spacing:-0.000px;transform:scaleX(0.9375);transform-origin:0 0;-webkit-text-stroke:0.2px currentColor;">Penyerahan</div>
<div class="t" style="left:977.85px;top:113.01px;font-size:9.4px;line-height:9.4px;font-weight:400;color:#fff;letter-spacing:-0.000px;transform:scaleX(0.9579);transform-origin:0 0;-webkit-text-stroke:0.2px currentColor;">Baptisan Air</div>
<div class="t" style="left:1051.25px;top:113.01px;font-size:9.4px;line-height:9.4px;font-weight:400;color:#fff;letter-spacing:-0.000px;transform:scaleX(0.9637);transform-origin:0 0;-webkit-text-stroke:0.2px currentColor;">Pernikahan</div>
<div class="t" style="left:1125.90px;top:113.01px;font-size:9.4px;line-height:9.4px;font-weight:400;color:#1f2d3d;letter-spacing:-0.000px;transform:scaleX(0.9569);transform-origin:0 0;-webkit-text-stroke:0.2px currentColor;">Kedukaan</div>
<div class="t" style="left:245.76px;top:151.38px;font-size:22.5px;line-height:22.5px;font-weight:400;color:#212529;letter-spacing:-0.000px;transform:scaleX(0.9428);transform-origin:0 0;">Laporan Jemaat - Pelayanan</div>
<div class="t" style="left:1179.10px;top:154.24px;font-size:12.3px;line-height:12.3px;font-weight:400;color:#212529;letter-spacing:-0.000px;transform:scaleX(0.8965);transform-origin:0 0;">LAPORAN</div>
<div class="t" style="left:1237.50px;top:154.24px;font-size:12.3px;line-height:12.3px;font-weight:400;color:#6c757d;letter-spacing:0.000px;">/</div>
<div class="t" style="left:1249.70px;top:154.24px;font-size:12.3px;line-height:12.3px;font-weight:400;color:#3a7bd5;letter-spacing:-0.000px;transform:scaleX(0.9449);transform-origin:0 0;">Jemaat - Pelayanan</div>
<div class="t" style="left:234.50px;top:202.64px;font-size:12.3px;line-height:12.3px;font-weight:400;color:#212529;letter-spacing:0.276px;">Data Jemaat - Pelayanan</div>
<div class="t" style="left:264.20px;top:269.25px;font-size:12.3px;line-height:12.3px;font-weight:400;color:#495057;letter-spacing:-0.000px;transform:scaleX(0.9591);transform-origin:0 0;">Singer</div>
<div class="t" style="left:530.80px;top:268.85px;font-size:12.3px;line-height:12.3px;font-weight:700;color:#ffffff;letter-spacing:-0.000px;transform:scaleX(0.9175);transform-origin:0 0;">Tampilkan Data</div>
<div class="t" style="left:270.00px;top:316.15px;font-size:12.3px;line-height:12.3px;font-weight:400;color:#212529;letter-spacing:-0.000px;transform:scaleX(0.9262);transform-origin:0 0;">Show</div>
<div class="t" style="left:309.60px;top:318.77px;font-size:8.5px;line-height:8.5px;font-weight:400;color:#495057;letter-spacing:-0.000px;transform:scaleX(0.8635);transform-origin:0 0;">10</div>
<div class="t" style="left:350.60px;top:316.15px;font-size:12.3px;line-height:12.3px;font-weight:400;color:#212529;letter-spacing:-0.000px;transform:scaleX(0.9820);transform-origin:0 0;">entries</div>
<div class="t" style="left:577.45px;top:318.55px;font-size:12.3px;line-height:12.3px;font-weight:400;color:#ffffff;letter-spacing:-0.000px;transform:scaleX(0.9457);transform-origin:0 0;">Excel</div>
<div class="t" style="left:625.34px;top:318.55px;font-size:12.3px;line-height:12.3px;font-weight:400;color:#ffffff;letter-spacing:-0.000px;transform:scaleX(0.8554);transform-origin:0 0;">PDF</div>
<div class="t" style="left:667.50px;top:318.55px;font-size:12.3px;line-height:12.3px;font-weight:400;color:#ffffff;letter-spacing:-0.000px;transform:scaleX(0.7783);transform-origin:0 0;">CSV</div>
<div class="t" style="left:708.20px;top:318.55px;font-size:12.3px;line-height:12.3px;font-weight:400;color:#ffffff;letter-spacing:-0.000px;transform:scaleX(0.9371);transform-origin:0 0;">Copy</div>
<div class="t" style="left:755.50px;top:318.55px;font-size:12.3px;line-height:12.3px;font-weight:400;color:#ffffff;letter-spacing:0.208px;">Print</div>
<div class="t" style="left:802.60px;top:318.55px;font-size:12.3px;line-height:12.3px;font-weight:400;color:#ffffff;letter-spacing:-0.000px;transform:scaleX(1.0000);transform-origin:0 0;">Column visibility</div>
<div class="t" style="left:1113.20px;top:315.85px;font-size:12.3px;line-height:12.3px;font-weight:400;color:#212529;letter-spacing:-0.000px;transform:scaleX(0.9342);transform-origin:0 0;">Search:</div>
<div class="t" style="left:261.00px;top:379.55px;font-size:12.3px;line-height:12.3px;font-weight:700;color:#212529;letter-spacing:-0.000px;transform:scaleX(0.9334);transform-origin:0 0;">No.</div>
<div class="t" style="left:316.50px;top:360.55px;font-size:12.3px;line-height:12.3px;font-weight:700;color:#212529;letter-spacing:0.000px;">Nomer</div>
<div class="t" style="left:315.00px;top:379.55px;font-size:12.3px;line-height:12.3px;font-weight:700;color:#212529;letter-spacing:0.000px;">Jemaat</div>
<div class="t" style="left:419.40px;top:379.55px;font-size:12.3px;line-height:12.3px;font-weight:700;color:#212529;letter-spacing:-0.000px;transform:scaleX(0.9390);transform-origin:0 0;">Nama</div>
<div class="t" style="left:667.40px;top:379.55px;font-size:12.3px;line-height:12.3px;font-weight:700;color:#212529;letter-spacing:-0.000px;transform:scaleX(0.9656);transform-origin:0 0;">Alamat</div>
<div class="t" style="left:937.60px;top:379.55px;font-size:12.3px;line-height:12.3px;font-weight:700;color:#212529;letter-spacing:-0.000px;transform:scaleX(0.9570);transform-origin:0 0;">Nomer HP</div>
<div class="t" style="left:1151.80px;top:379.55px;font-size:12.3px;line-height:12.3px;font-weight:700;color:#212529;letter-spacing:-0.000px;transform:scaleX(0.9615);transform-origin:0 0;">Pelayanan</div>
<div class="t" style="left:274.50px;top:420.55px;font-size:12.3px;line-height:12.3px;font-weight:400;color:#2b2f33;letter-spacing:0.000px;">1</div>
<div class="t" style="left:324.75px;top:420.55px;font-size:12.3px;line-height:12.3px;font-weight:400;color:#2b2f33;letter-spacing:-0.000px;transform:scaleX(0.9103);transform-origin:0 0;">000001</div>
<div class="t" style="left:420.17px;top:420.55px;font-size:12.3px;line-height:12.3px;font-weight:400;color:#2b2f33;letter-spacing:-0.000px;transform:scaleX(0.9327);transform-origin:0 0;">Doddy A</div>
<div class="t" style="left:618.90px;top:420.55px;font-size:12.3px;line-height:12.3px;font-weight:400;color:#2b2f33;letter-spacing:-0.000px;transform:scaleX(0.9346);transform-origin:0 0;">Jl. Semarang 1234, Surabaya</div>
<div class="t" style="left:942.05px;top:420.55px;font-size:12.3px;line-height:12.3px;font-weight:400;color:#2b2f33;letter-spacing:-0.000px;transform:scaleX(0.9176);transform-origin:0 0;">0812345679</div>
<div class="t" style="left:1127.38px;top:420.55px;font-size:12.3px;line-height:12.3px;font-weight:400;color:#2b2f33;letter-spacing:-0.000px;transform:scaleX(0.9703);transform-origin:0 0;">Penerima Tamu,Singer</div>
<div class="t" style="left:274.50px;top:459.55px;font-size:12.3px;line-height:12.3px;font-weight:400;color:#2b2f33;letter-spacing:0.000px;">2</div>
<div class="t" style="left:324.75px;top:459.55px;font-size:12.3px;line-height:12.3px;font-weight:400;color:#2b2f33;letter-spacing:-0.000px;transform:scaleX(0.9309);transform-origin:0 0;">000011</div>
<div class="t" style="left:428.17px;top:459.55px;font-size:12.3px;line-height:12.3px;font-weight:400;color:#2b2f33;letter-spacing:0.000px;">Nurul</div>
<div class="t" style="left:630.05px;top:459.55px;font-size:12.3px;line-height:12.3px;font-weight:400;color:#2b2f33;letter-spacing:-0.000px;transform:scaleX(0.9351);transform-origin:0 0;">Jl Semeru 123, Surabaya</div>
<div class="t" style="left:935.75px;top:459.55px;font-size:12.3px;line-height:12.3px;font-weight:400;color:#2b2f33;letter-spacing:-0.000px;transform:scaleX(0.9182);transform-origin:0 0;">081987654321</div>
<div class="t" style="left:1172.00px;top:459.55px;font-size:12.3px;line-height:12.3px;font-weight:400;color:#2b2f33;letter-spacing:-0.000px;transform:scaleX(0.9309);transform-origin:0 0;">Singer</div>
<div class="t" style="left:274.50px;top:499.75px;font-size:12.3px;line-height:12.3px;font-weight:400;color:#2b2f33;letter-spacing:0.000px;">3</div>
<div class="t" style="left:324.75px;top:499.75px;font-size:12.3px;line-height:12.3px;font-weight:400;color:#2b2f33;letter-spacing:-0.000px;transform:scaleX(0.9103);transform-origin:0 0;">000020</div>
<div class="t" style="left:430.41px;top:499.75px;font-size:12.3px;line-height:12.3px;font-weight:400;color:#2b2f33;letter-spacing:0.000px;">Amir</div>
<div class="t" style="left:600.00px;top:499.75px;font-size:12.3px;line-height:12.3px;font-weight:400;color:#2b2f33;letter-spacing:-0.000px;transform:scaleX(0.9414);transform-origin:0 0;">Jl. Rungkut Mejoyo 12345, Surabaya</div>
<div class="t" style="left:938.75px;top:499.75px;font-size:12.3px;line-height:12.3px;font-weight:400;color:#2b2f33;letter-spacing:-0.000px;transform:scaleX(0.9219);transform-origin:0 0;">08901234567</div>
<div class="t" style="left:1137.50px;top:499.75px;font-size:12.3px;line-height:12.3px;font-weight:400;color:#2b2f33;letter-spacing:-0.000px;transform:scaleX(0.9391);transform-origin:0 0;">Song Leader,Singer</div>
<div class="t" style="left:269.80px;top:557.64px;font-size:12.3px;line-height:12.3px;font-weight:400;color:#212529;letter-spacing:-0.000px;transform:scaleX(0.9542);transform-origin:0 0;">Showing 1 to 3 of 3 entries</div>
<div class="t" style="left:1168.02px;top:554.75px;font-size:12.3px;line-height:12.3px;font-weight:400;color:#848b92;letter-spacing:-0.000px;transform:scaleX(0.9809);transform-origin:0 0;">Previous</div>
<div class="t" style="left:1235.00px;top:554.75px;font-size:12.3px;line-height:12.3px;font-weight:400;color:#ffffff;letter-spacing:0.000px;">1</div>
<div class="t" style="left:1261.46px;top:554.75px;font-size:12.3px;line-height:12.3px;font-weight:400;color:#848b92;letter-spacing:-0.000px;transform:scaleX(0.9450);transform-origin:0 0;">Next</div>
<div class="t" style="left:213.20px;top:691.84px;font-size:12.3px;line-height:12.3px;font-weight:700;color:#869099;letter-spacing:-0.000px;transform:scaleX(0.9609);transform-origin:0 0;">Copyright © 2023</div>
<div class="t" style="left:313.70px;top:691.84px;font-size:12.3px;line-height:12.3px;font-weight:700;color:#3a7bd5;letter-spacing:-0.000px;transform:scaleX(0.9405);transform-origin:0 0;">Era Sistem Media.</div>
<div class="t" style="left:415.80px;top:691.84px;font-size:12.3px;line-height:12.3px;font-weight:400;color:#869099;letter-spacing:-0.000px;transform:scaleX(0.9693);transform-origin:0 0;">All rights reserved.</div>
<div class="t" style="left:1158.50px;top:691.84px;font-size:12.3px;line-height:12.3px;font-weight:700;color:#c8444f;letter-spacing:-0.000px;transform:scaleX(0.9464);transform-origin:0 0;">Sistem Informasi Gereja</div>
<div class="t" style="left:1295.50px;top:691.84px;font-size:12.3px;line-height:12.3px;font-weight:400;color:#869099;letter-spacing:-0.000px;transform:scaleX(0.9337);transform-origin:0 0;">Version 2.0</div>
<div class="t" style="left:50.50px;top:730.52px;font-size:11.5px;line-height:11.5px;font-weight:400;color:#1a1a1a;letter-spacing:-0.000px;transform:scaleX(0.8901);transform-origin:0 0;">31°C</div>
<div class="t" style="left:50.50px;top:746.52px;font-size:11.5px;line-height:11.5px;font-weight:400;color:#5a5a5a;letter-spacing:-0.000px;transform:scaleX(0.9959);transform-origin:0 0;">Cerah</div>
<div class="t" style="left:391.40px;top:737.52px;font-size:13.5px;line-height:13.5px;font-weight:400;color:#5d5d5d;letter-spacing:-0.000px;transform:scaleX(0.9511);transform-origin:0 0;">Search</div>
<div class="t" style="left:1294.50px;top:730.58px;font-size:11.2px;line-height:11.2px;font-weight:400;color:#1a1a1a;letter-spacing:0.081px;">10:40</div>
<div class="t" style="left:1261.60px;top:746.48px;font-size:11.2px;line-height:11.2px;font-weight:400;color:#1a1a1a;letter-spacing:0.581px;">10/06/2023</div>
</body></html>
